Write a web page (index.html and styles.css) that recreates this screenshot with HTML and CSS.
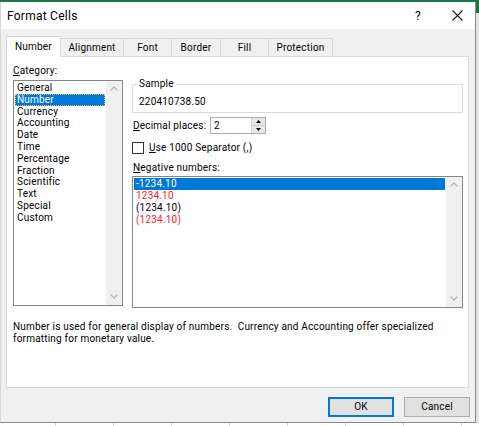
FILE: index.html
```html
<!DOCTYPE html>
<html>
<head>
<meta charset="utf-8">
<title>Format Cells</title>
<link rel="stylesheet" href="styles.css">
</head>
<body>
<div class="screen">
  <div class="excel-top"></div>
  <div class="row">
    <div class="dialog">
      <div class="titlebar">
        <span class="title">Format Cells</span>
        <span class="help">?</span>
        <svg class="close" width="11" height="11" viewBox="0 0 11 11"><path d="M0.5 0.5 L10.5 10.5 M10.5 0.5 L0.5 10.5" stroke="#1a1a1a" stroke-width="1.1" fill="none"/></svg>
      </div>
      <div class="body">
        <div class="tabs">
          <div class="tab active w-number">Number</div>
          <div class="tab w-align">Alignment</div>
          <div class="tab w-font">Font</div>
          <div class="tab w-border">Border</div>
          <div class="tab w-fill">Fill</div>
          <div class="tab w-prot">Protection</div>
        </div>
        <div class="panel">
          <div class="cols">
            <div class="left">
              <div class="lbl"><u>C</u>ategory:</div>
              <div class="listbox cat">
                <ul class="items">
                  <li>General</li>
                  <li class="sel focus">Number</li>
                  <li>Currency</li>
                  <li>Accounting</li>
                  <li>Date</li>
                  <li>Time</li>
                  <li>Percentage</li>
                  <li>Fraction</li>
                  <li>Scientific</li>
                  <li>Text</li>
                  <li>Special</li>
                  <li>Custom</li>
                </ul>
                <div class="vscroll">
                  <svg width="8" height="5" viewBox="0 0 8 5"><path d="M0.6 4.4 L4 1 L7.4 4.4" stroke="#b4b4b4" stroke-width="1.3" fill="none"/></svg>
                  <svg width="8" height="5" viewBox="0 0 8 5"><path d="M0.6 0.6 L4 4 L7.4 0.6" stroke="#b4b4b4" stroke-width="1.3" fill="none"/></svg>
                </div>
              </div>
            </div>
            <div class="right">
              <fieldset class="sample">
                <legend>Sample</legend>
                <div class="sample-val">220410738.50</div>
              </fieldset>
              <div class="dec-row">
                <span class="dec-lbl"><u>D</u>ecimal places:</span>
                <div class="spin">
                  <span class="spin-val">2</span>
                  <div class="spin-btns">
                    <div class="spin-btn"><svg width="5" height="3" viewBox="0 0 5 3"><path d="M0 3 L2.5 0 L5 3 Z" fill="#000"/></svg></div>
                    <div class="spin-btn"><svg width="5" height="3" viewBox="0 0 5 3"><path d="M0 0 L2.5 3 L5 0 Z" fill="#000"/></svg></div>
                  </div>
                </div>
              </div>
              <div class="chk-row">
                <span class="chk"></span>
                <span><u>U</u>se 1000 Separator (,)</span>
              </div>
              <div class="lbl neg-lbl"><u>N</u>egative numbers:</div>
              <div class="listbox neg">
                <ul class="items">
                  <li class="sel">-1234.10</li>
                  <li class="red">1234.10</li>
                  <li>(1234.10)</li>
                  <li class="red">(1234.10)</li>
                </ul>
                <div class="vscroll">
                  <svg width="8" height="5" viewBox="0 0 8 5"><path d="M0.6 4.4 L4 1 L7.4 4.4" stroke="#b4b4b4" stroke-width="1.3" fill="none"/></svg>
                  <svg width="8" height="5" viewBox="0 0 8 5"><path d="M0.6 0.6 L4 4 L7.4 0.6" stroke="#b4b4b4" stroke-width="1.3" fill="none"/></svg>
                </div>
              </div>
            </div>
          </div>
          <p class="desc">Number is used for general display of numbers.&nbsp; Currency and Accounting offer specialized<br>formatting for monetary value.</p>
        </div>
        <div class="buttons">
          <div class="btn ok">OK</div>
          <div class="btn">Cancel</div>
        </div>
      </div>
    </div>
    <div class="side"></div>
  </div>
  <div class="sheet"></div>
</div>
</body>
</html>
```

FILE: styles.css
```css
* { box-sizing: border-box; }
html, body { margin: 0; padding: 0; }
body {
  width: 479px;
  height: 426px;
  overflow: hidden;
  background: #ffffff;
  font-family: Roboto, "Noto Sans", "DejaVu Sans", sans-serif;
  font-size: 10px;
  letter-spacing: 0.2px;
  color: #000;
}
.screen { width: 479px; height: 426px; display: flex; flex-direction: column; }
.excel-top { height: 2px; background: #217346; flex: none; }
.row { display: flex; height: 421px; flex: none; }
.dialog {
  width: 476px;
  height: 421px;
  border-left: 1px solid #d6d6d6;
  border-right: 1px solid #8a8a8a;
  border-bottom: 1px solid #8a8a8a;
  display: flex;
  flex-direction: column;
  flex: none;
}
.side {
  flex: 1;
  background: linear-gradient(#217346 0, #217346 11px, #e3e3e3 11px, #e3e3e3 100%);
}
.sheet {
  flex: 1;
  background-color: #fff;
  background-image: repeating-linear-gradient(90deg, transparent 0, transparent 55px, #d4d4d4 55px, #d4d4d4 56px, transparent 56px, transparent 58px);
}

/* title bar */
.titlebar {
  height: 27px;
  background: #fff;
  display: flex;
  align-items: center;
  padding-left: 6px;
  flex: none;
}
.title { font-size: 12px; line-height: 14px; letter-spacing: 0.25px; }
.help { margin-left: auto; font-size: 12px; line-height: 14px; width: 10px; text-align: center; margin-right: 29px; }
.close { margin-right: 12px; }

/* body */
.body {
  flex: 1;
  background: #f0f0f0;
  padding: 7px 5px 5px 5px;
  display: flex;
  flex-direction: column;
}
.tabs { display: flex; height: 20px; align-items: flex-end; flex: none; }
.tab {
  height: 18px;
  border-top: 1px solid #d9d9d9;
  border-right: 1px solid #d9d9d9;
  background: #f0f0f0;
  display: flex;
  align-items: center;
  justify-content: center;
  line-height: 12px;
  padding-top: 1px;
}
.tab.active {
  height: 21px;
  margin-bottom: -1px;
  background: #fff;
  border-left: 1px solid #d9d9d9;
  position: relative;
  z-index: 1;
  padding-top: 0;
  padding-bottom: 1px;
}
.w-number { width: 55px; }
.w-align { width: 63px; }
.w-font { width: 48px; }
.w-border { width: 49px; }
.w-fill { width: 48px; }
.w-prot { width: 64px; }

.panel {
  width: 463px;
  height: 332px;
  background: #fff;
  border: 1px solid #d9d9d9;
  padding: 7px 5px 0 6px;
  flex: none;
}
.cols {
  display: grid;
  grid-template-columns: 110px 331px;
  column-gap: 9px;
}
.lbl { line-height: 14px; }
.left .lbl { margin-bottom: 2px; }

.listbox {
  border: 1px solid #828790;
  display: flex;
  background: #fff;
}
.listbox.cat { height: 226px; }
.listbox.neg { height: 132px; }
.items {
  list-style: none;
  margin: 0;
  padding: 1px 1px 0 1px;
  flex: 1;
}
.cat .items li { line-height: 11.8px; height: 11.8px; padding-left: 2px; white-space: nowrap; }
.neg .items li { line-height: 12px; height: 12px; padding-left: 2px; white-space: nowrap; }
.items li.sel { background: #0078d7; color: #fff; }
.items li.focus { outline: 1px dotted #f5b64a; outline-offset: -1px; }
.items li.red { color: #ff1a1a; }
.vscroll {
  width: 16px;
  background: #f0f0f0;
  display: flex;
  flex-direction: column;
  justify-content: space-between;
  align-items: center;
  padding: 5px 0 6px;
  flex: none;
}

/* right column */
.sample {
  margin: 14px 0 0 0;
  border: 1px solid #dcdcdc;
  padding: 6px 0 4px 5px;
  min-width: 0;
}
.sample legend {
  padding: 0 1px;
  line-height: 12px;
}
.sample-val { line-height: 12px; padding-left: 1px; }

.dec-row {
  display: flex;
  align-items: center;
  margin-top: 4px;
  height: 17px;
}
.dec-lbl { width: 78px; padding-left: 1px; line-height: 12px; }
.spin {
  width: 56px;
  height: 17px;
  border: 1px solid #adadad;
  display: flex;
  align-items: stretch;
  background: #fff;
}
.spin-val { flex: 1; padding-left: 3px; line-height: 15px; }
.spin-btns {
  width: 14px;
  display: flex;
  flex-direction: column;
  border-left: 1px solid #d4d4d4;
  background: #e6e6e6;
}
.spin-btn {
  flex: 1;
  display: flex;
  align-items: center;
  justify-content: center;
}
.spin-btn + .spin-btn { border-top: 1px solid #c8c8c8; }

.chk-row {
  display: flex;
  align-items: center;
  margin-top: 7px;
  height: 14px;
  line-height: 12px;
}
.chk {
  width: 12px;
  height: 12px;
  border: 1px solid #333;
  background: #fff;
  margin-right: 5px;
  flex: none;
}
.neg-lbl { margin-top: 7px; line-height: 12px; margin-bottom: 2px; padding-left: 1px; }

.desc {
  margin: 13px 0 0 0;
  line-height: 12px;
  white-space: nowrap;
}

/* buttons */
.buttons {
  display: flex;
  justify-content: flex-end;
  gap: 10px;
  margin-top: 9px;
  flex: none;
}
.btn {
  width: 66px;
  height: 20px;
  background: #e1e1e1;
  border: 1px solid #adadad;
  display: flex;
  align-items: center;
  justify-content: center;
  line-height: 12px;
}
.btn.ok { border: 2px solid #0078d7; }
```
